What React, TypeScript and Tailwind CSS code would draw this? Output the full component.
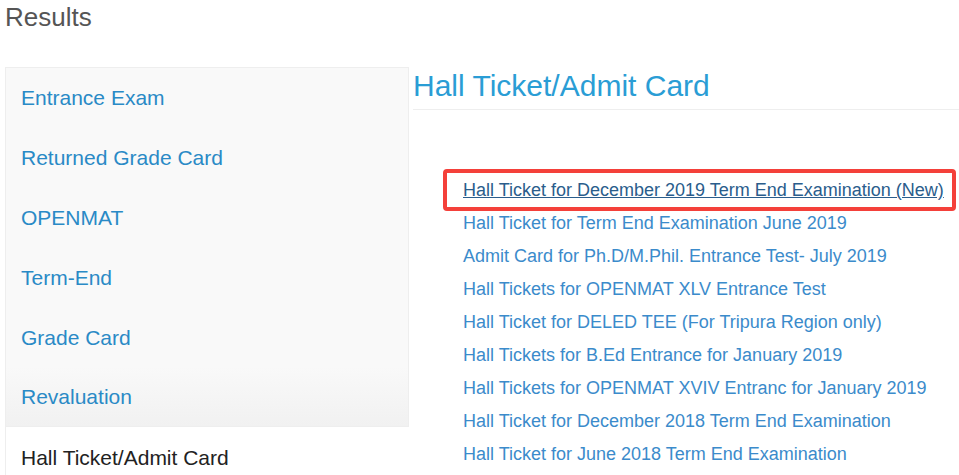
import React from 'react';

const menu = [
  'Entrance Exam',
  'Returned Grade Card',
  'OPENMAT',
  'Term-End',
  'Grade Card',
  'Revaluation',
];

const links = [
  'Hall Ticket for Term End Examination June 2019',
  'Admit Card for Ph.D/M.Phil. Entrance Test- July 2019',
  'Hall Tickets for OPENMAT XLV Entrance Test',
  'Hall Ticket for DELED TEE (For Tripura Region only)',
  'Hall Tickets for B.Ed Entrance for January 2019',
  'Hall Tickets for OPENMAT XVIV Entranc for January 2019',
  'Hall Ticket for December 2018 Term End Examination',
  'Hall Ticket for June 2018 Term End Examination',
];

const App: React.FC = () => {
  return (
    <div className="w-[959px] h-[475px] overflow-hidden bg-white pl-[5px] pt-[2px] font-['Liberation_Sans',Arial,sans-serif]">
      <h2 className="text-[26px] leading-[30px] text-[#555]">Results</h2>

      <div className="flex mt-[35px]">
        {/* Side menu */}
        <ul className="w-[404px] shrink-0">
          {menu.map((item, i) => (
            <li
              key={item}
              className={`h-[60px] flex items-center pl-[15px] pt-[1px] text-[21px] text-[#2a8ac6] border-x border-[#eee] ${
                i === 0 ? 'border-t' : ''
              } ${
                i === menu.length - 1
                  ? 'bg-gradient-to-b from-[#f9f9f9] to-[#f1f1f1] border-b'
                  : 'bg-[#f9f9f9]'
              }`}
            >
              {item}
            </li>
          ))}
          <li className="h-[60px] flex items-center pl-[15px] pt-[1px] text-[21px] text-[#222] bg-white border-l border-[#eee]">
            Hall Ticket/Admit Card
          </li>
        </ul>

        {/* Content */}
        <div className="flex-1 pl-[4px]">
          <h2 className="mt-[1px] text-[30px] leading-[36px] pb-[5px] text-[#2a9dd5] border-b border-[#eee]">
            Hall Ticket/Admit Card
          </h2>
          <ul className="mt-[64px] pl-[50px] text-[18px] leading-[33px]">
            <li>
              <span className="relative inline-block">
                <a href="#" className="underline text-[#2a5d8c]">
                  Hall Ticket for December 2019 Term End Examination (New)
                </a>
                <span className="absolute -left-[20px] -right-[12px] -top-[5px] -bottom-[4px] border-4 border-[#f4403a] rounded-[4px] pointer-events-none" />
              </span>
            </li>
            {links.map((l) => (
              <li key={l}>
                <a href="#" className="text-[#3b8bcb]">
                  {l}
                </a>
              </li>
            ))}
          </ul>
        </div>
      </div>
    </div>
  );
};

export default App;
